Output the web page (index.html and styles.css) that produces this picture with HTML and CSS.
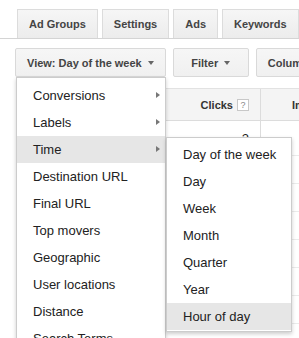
FILE: index.html
```html
<!DOCTYPE html>
<html lang="en">
<head>
<meta charset="UTF-8" />
<meta name="viewport" content="width=device-width, initial-scale=1" />
<title>Campaign view</title>
<link rel="stylesheet" href="styles.css">
</head>
<body>

<div class="tabs">
  <div class="tab">Ad Groups</div>
  <div class="tab">Settings</div>
  <div class="tab">Ads</div>
  <div class="tab">Keywords</div>
  <div class="tab">Audiences</div>
</div>

<div class="toolbar">
  <div class="dropdown">
    <button class="btn">View: Day of the week <span class="caret"></span></button>
    <ul class="menu">
      <li class="item has-sub">Conversions</li>
      <li class="item has-sub">Labels</li>
      <li class="item has-sub active">Time
        <ul class="menu submenu">
          <li class="item">Day of the week</li>
          <li class="item">Day</li>
          <li class="item">Week</li>
          <li class="item">Month</li>
          <li class="item">Quarter</li>
          <li class="item">Year</li>
          <li class="item active">Hour of day</li>
        </ul>
      </li>
      <li class="item">Destination URL</li>
      <li class="item">Final URL</li>
      <li class="item">Top movers</li>
      <li class="item">Geographic</li>
      <li class="item">User locations</li>
      <li class="item">Distance</li>
      <li class="item">Search Terms</li>
    </ul>
  </div>
  <button class="btn btn-filter">Filter <span class="caret"></span></button>
  <button class="btn">Columns <span class="caret"></span></button>
</div>

<div class="grid">
  <div class="row head">
    <div class="cell"></div>
    <div class="cell num">Clicks <span class="help">?</span></div>
    <div class="cell col3">Impr. <span class="help">?</span></div>
  </div>
  <div class="row">
    <div class="cell"></div>
    <div class="cell num">2</div>
    <div class="cell col3"></div>
  </div>
  <div class="row"><div class="cell"></div><div class="cell num"></div><div class="cell col3"></div></div>
  <div class="row"><div class="cell"></div><div class="cell num"></div><div class="cell col3"></div></div>
  <div class="row"><div class="cell"></div><div class="cell num"></div><div class="cell col3"></div></div>
  <div class="row"><div class="cell"></div><div class="cell num"></div><div class="cell col3"></div></div>
  <div class="row"><div class="cell"></div><div class="cell num"></div><div class="cell col3"></div></div>
  <div class="row"><div class="cell"></div><div class="cell num"></div><div class="cell col3"></div></div>
</div>

</body>
</html>
```

FILE: styles.css
```css
body {
  margin: 0;
  width: 299px;
  height: 338px;
  overflow: hidden;
  background: #fff;
  font-family: "Liberation Sans", Arial, sans-serif;
  color: #222;
}
.tabs {
  display: flex;
  gap: 4px;
  padding: 9px 0 0 17px;
  border-bottom: 1px solid #d4d4d4;
  white-space: nowrap;
}
.tab {
  flex: none;
  height: 28px;
  line-height: 28px;
  padding: 0 11px;
  border: 1px solid #dcdcdc;
  border-bottom: 0;
  background: linear-gradient(#f6f6f6, #ececec);
  font-size: 11px;
  font-weight: bold;
  color: #444;
}
.toolbar {
  display: flex;
  gap: 7px;
  margin-top: 9px;
  padding-left: 15px;
  white-space: nowrap;
}
.dropdown {
  position: relative;
  flex: none;
}
.btn {
  flex: none;
  display: flex;
  align-items: center;
  justify-content: center;
  gap: 6px;
  height: 29px;
  padding: 0 11px;
  border: 1px solid #d9d9d9;
  border-radius: 2px;
  background: linear-gradient(#f6f6f6, #f0f0f0);
  font-family: inherit;
  font-size: 11px;
  font-weight: bold;
  color: #444;
}
.btn-filter {
  min-width: 76px;
}
.caret {
  width: 0;
  height: 0;
  border-top: 4px solid #666;
  border-left: 3.5px solid transparent;
  border-right: 3.5px solid transparent;
}
.menu {
  position: absolute;
  top: 100%;
  left: 1px;
  z-index: 2;
  width: 148px;
  margin: 0;
  padding: 4px 0;
  list-style: none;
  background: #fff;
  border: 1px solid rgba(0,0,0,0.2);
  box-shadow: 0 2px 4px rgba(0,0,0,0.2);
}
.item {
  position: relative;
  height: 27px;
  line-height: 27px;
  padding-left: 16px;
  font-size: 13px;
  color: #222;
  white-space: nowrap;
}
.item.active {
  background: #e6e6e6;
}
.has-sub::after {
  content: "";
  position: absolute;
  right: 5px;
  top: 10px;
  border-left: 4px solid #777;
  border-top: 3.5px solid transparent;
  border-bottom: 3.5px solid transparent;
}
.submenu {
  top: 1px;
  left: calc(100% + 1px);
  width: 124px;
  padding: 3px 0 1px;
  z-index: 3;
}
.grid {
  margin: 11px 0 0 16px;
  border-top: 1px solid #e2e2e2;
}
.row {
  display: grid;
  grid-template-columns: 154px 90px 1fr;
  height: 27px;
  border-bottom: 1px solid #ebebeb;
  font-size: 13px;
}
.row.head {
  height: 31px;
  background: #f4f4f4;
  border-bottom-color: #dcdcdc;
  font-size: 11px;
  font-weight: bold;
  color: #333;
}
.row:nth-child(2) {
  height: 34px;
}
.cell {
  display: flex;
  align-items: center;
  gap: 4px;
  white-space: nowrap;
}
.num {
  justify-content: flex-end;
  padding-right: 11px;
}
.col3 {
  border-left: 1px solid #dcdcdc;
  padding-left: 31px;
}
.help {
  box-sizing: border-box;
  width: 12px;
  height: 12px;
  border: 1px solid #c8c8c8;
  background: #fff;
  font-size: 9px;
  font-weight: normal;
  line-height: 10px;
  text-align: center;
  color: #888;
}
```
